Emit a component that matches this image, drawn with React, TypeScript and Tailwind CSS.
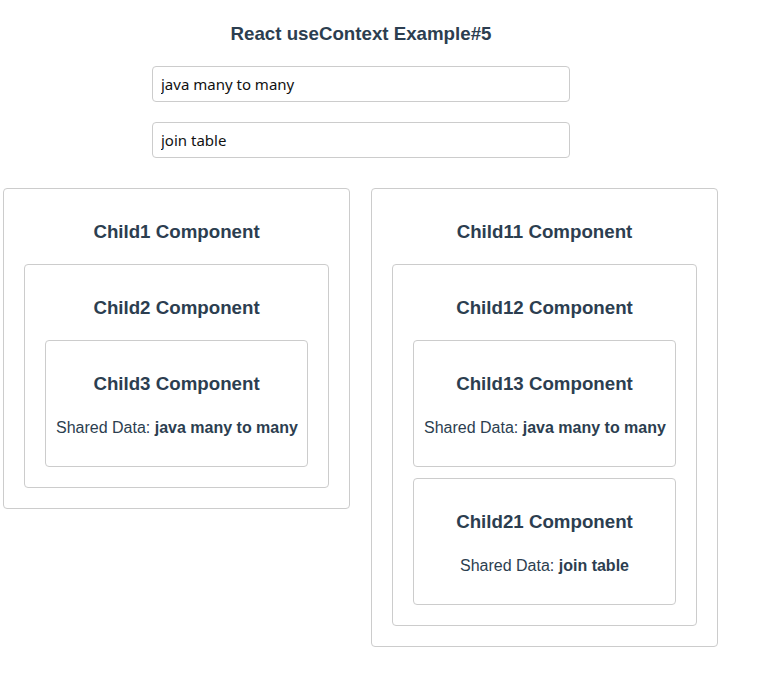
import React, { createContext, useContext, useState } from 'react'

const DataContext = createContext({ first: '', second: '' })

const Box: React.FC<{ title: string; className?: string; children?: React.ReactNode }> = ({ title, className = 'm-[10px]', children }) => (
	<div className={`border border-[#cccccc] rounded-[4px] p-[10px] ${className}`}>
		<h3 className="mt-[21.5px] mb-[21.5px] text-[18.72px] leading-[22px] font-bold text-center">{title}</h3>
		{children}
	</div>
)

const Shared: React.FC<{ value: string }> = ({ value }) => (
	<p className="text-[16px] leading-[24px] text-center mt-[21.5px] mb-[16px] whitespace-nowrap">
		Shared Data: <strong className="font-bold">{value}</strong>
	</p>
)

const Child3 = () => {
	const { first } = useContext(DataContext)
	return (
		<Box title="Child3 Component">
			<Shared value={first} />
		</Box>
	)
}

const Child13 = () => {
	const { first } = useContext(DataContext)
	return (
		<Box title="Child13 Component">
			<Shared value={first} />
		</Box>
	)
}

const Child21 = () => {
	const { second } = useContext(DataContext)
	return (
		<Box title="Child21 Component" className="mx-[10px] mt-[11px] mb-[10px]">
			<Shared value={second} />
		</Box>
	)
}

const App: React.FC = () => {
	const [first, setFirst] = useState('java many to many')
	const [second, setSecond] = useState('join table')

	return (
		<DataContext.Provider value={{ first, second }}>
			<div className="w-[722px] pt-[22px] text-[#2c3e50]" style={{ fontFamily: '"Liberation Sans", Arial, sans-serif' }}>
				<h3 className="text-[18.72px] leading-[24px] font-bold text-center">React useContext Example#5</h3>
				<div className="flex flex-col items-center gap-[20px] mt-[20px]">
					<input
						className="w-[418px] h-[36px] border border-[#cccccc] rounded-[4px] px-[8px] text-[15px] text-[#111] outline-none"
						style={{ fontFamily: '"Noto Sans", sans-serif' }}
						value={first}
						onChange={e => setFirst(e.target.value)}
					/>
					<input
						className="w-[418px] h-[36px] border border-[#cccccc] rounded-[4px] px-[8px] text-[15px] text-[#111] outline-none"
						style={{ fontFamily: '"Noto Sans", sans-serif' }}
						value={second}
						onChange={e => setSecond(e.target.value)}
					/>
				</div>
				<div className="flex items-start gap-[1px] mt-[20px] -ml-[7px]">
					<div className="w-[367px]">
						<Box title="Child1 Component">
							<Box title="Child2 Component">
								<Child3 />
							</Box>
						</Box>
					</div>
					<div className="w-[367px]">
						<Box title="Child11 Component">
							<Box title="Child12 Component">
								<Child13 />
								<Child21 />
							</Box>
						</Box>
					</div>
				</div>
			</div>
		</DataContext.Provider>
	)
}

export default App
